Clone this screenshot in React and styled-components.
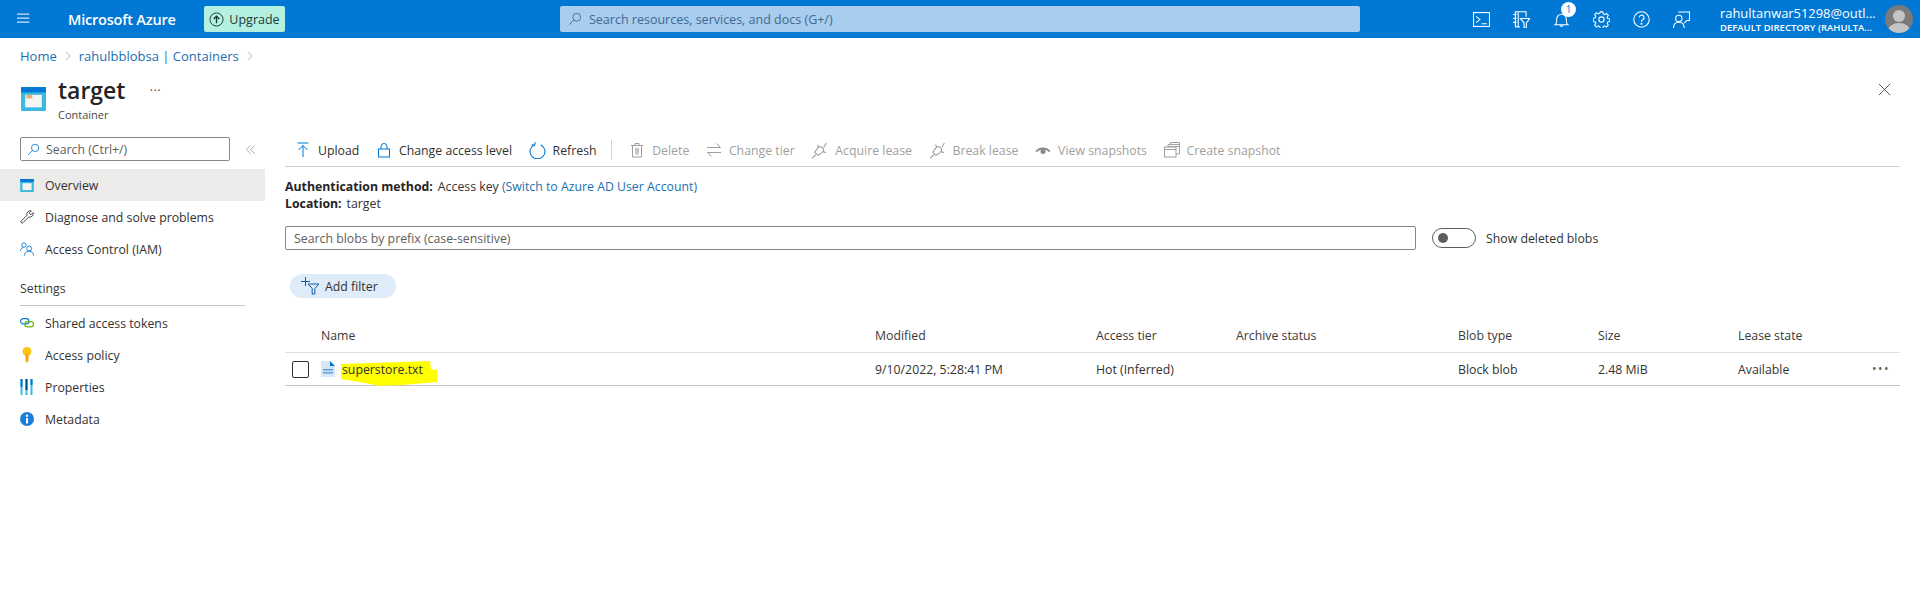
import React from 'react'
import styled, { createGlobalStyle } from 'styled-components'

const Global = createGlobalStyle`
  html, body { margin: 0; padding: 0; background: #fff; }
  body {
    font-family: "Open Sans", "Noto Sans", "Liberation Sans", sans-serif;
    font-size: 12.3px;
    color: #323130;
  }
`

const Page = styled.div`
  width: 1920px;
  height: 591px;
  overflow: hidden;
  display: flex;
  flex-direction: column;
`

/* top bar */
const TopBar = styled.header`
  height: 38px;
  background: #0078d4;
  color: #fff;
  display: flex;
  align-items: center;
  flex-shrink: 0;
`
const Burger = styled.div`
  width: 68px;
  padding-left: 17px;
  box-sizing: border-box;
  display: flex;
`
const Brand = styled.div`
  font-size: 14.5px;
  font-weight: 600;
  width: 136px;
  letter-spacing: -0.2px;
`
const UpgradeBtn = styled.div`
  width: 81px;
  height: 26px;
  margin-right: 275px;
  background: #b3f0e0;
  border-radius: 2px;
  color: #1b3a36;
  display: flex;
  align-items: center;
  justify-content: center;
  gap: 5px;
  font-size: 12.5px;
`
const GlobalSearch = styled.div`
  width: 800px;
  height: 26px;
  background: #a9cdee;
  border-radius: 2px;
  display: flex;
  align-items: center;
  gap: 7px;
  padding-left: 8px;
  box-sizing: border-box;
  color: #3e6a8e;
  font-size: 12.5px;
`
const BarIcons = styled.div`
  margin-left: 111px;
  display: flex;
  align-items: center;
  gap: 20px;
`
const BarIcon = styled.div`
  width: 20px;
  height: 20px;
  position: relative;
  display: flex;
  align-items: center;
  justify-content: center;
`
const Badge = styled.span`
  position: absolute;
  top: -7px;
  right: -5px;
  width: 15px;
  height: 15px;
  border-radius: 50%;
  background: #fff;
  color: #0078d4;
  font-size: 10px;
  line-height: 15px;
  text-align: center;
`
const Account = styled.div`
  margin-left: 29px;
  width: 167px;
  display: flex;
  flex-direction: column;
`
const AccountName = styled.div`
  font-size: 12.9px;
  line-height: 16px;
  white-space: nowrap;
`
const AccountDir = styled.div`
  font-size: 9.5px;
  font-weight: 600;
  line-height: 13px;
  white-space: nowrap;
`
const Avatar = styled.div`
  width: 28px;
  height: 28px;
  border-radius: 50%;
  background: #7a7a7a;
  overflow: hidden;
  margin-left: -2px;
  flex-shrink: 0;
`

/* blade heading */
const Crumbs = styled.nav`
  height: 36px;
  padding-left: 20px;
  box-sizing: border-box;
  display: flex;
  align-items: center;
  gap: 6px;
  color: #1a6fb0;
  font-size: 13px;
  flex-shrink: 0;
`
const BladeHead = styled.div`
  height: 50px;
  padding: 0 20px 0 21px;
  display: flex;
  align-items: flex-start;
  flex-shrink: 0;
`
const TitleIcon = styled.div`
  width: 37px;
  padding-top: 13px;
`
const TitleStack = styled.div`
  display: flex;
  flex-direction: column;
`
const Title = styled.h1`
  margin: 0;
  font-size: 23px;
  font-weight: 600;
  line-height: 32px;
  color: #252423;
`
const SubTitle = styled.div`
  font-size: 11px;
  line-height: 15px;
  margin-top: 1px;
  color: #4b4a48;
`
const TitleMore = styled.div`
  margin: 6px 0 0 24px;
  font-size: 13px;
  line-height: 12px;
  letter-spacing: 0.5px;
  color: #555;
`
const CloseBtn = styled.div`
  margin-left: auto;
  padding: 9px 9px 0 0;
`

/* columns */
const Body = styled.div`
  display: grid;
  grid-template-columns: 265px 1fr;
  flex: 1;
  min-height: 0;
`
const Side = styled.aside`
  display: flex;
  flex-direction: column;
`
const SideSearchRow = styled.div`
  height: 45px;
  padding: 13px 0 0 20px;
  box-sizing: border-box;
  display: flex;
  align-items: flex-start;
`
const SideSearch = styled.div`
  width: 210px;
  height: 24px;
  border: 1px solid #8a8886;
  border-radius: 2px;
  display: flex;
  align-items: center;
  gap: 6px;
  padding-left: 6px;
  box-sizing: border-box;
  color: #605e5c;
`
const Collapse = styled.div`
  margin: 7px 0 0 15px;
  display: flex;
`
const NavRow = styled.div`
  height: 32px;
  padding-left: 20px;
  display: flex;
  align-items: center;
  gap: 11px;
  background: ${p => (p.$active ? '#edebe9' : 'transparent')};
  white-space: nowrap;
`
const NavIcon = styled.span`
  width: 14px;
  height: 16px;
  display: flex;
  align-items: center;
  justify-content: center;
`
const NavGroup = styled.div`
  margin: 15px 20px 1px 20px;
  padding-bottom: 7px;
  border-bottom: 1px solid #c8c6c4;
  font-weight: 500;
  line-height: 18px;
  color: #3b3a39;
`

const Main = styled.main`
  padding-left: 20px;
  padding-right: 20px;
  display: flex;
  flex-direction: column;
`
const Toolbar = styled.div`
  height: 43px;
  box-sizing: border-box;
  border-bottom: 1px solid #d2d0ce;
  display: flex;
  align-items: center;
  padding: 10px 0 0 10px;
`
const Tool = styled.div`
  display: flex;
  align-items: center;
  gap: 7px;
  margin-right: 16.6px;
  white-space: nowrap;
  color: ${p => (p.$off ? '#a19f9d' : '#323130')};
`
const ToolSep = styled.div`
  width: 1px;
  height: 20px;
  background: #d2d0ce;
  margin: 0 17px 0 -2px;
`
const InfoLine = styled.div`
  line-height: 17px;
  white-space: nowrap;
  b { font-weight: 700; margin-right: 5px; color: #252423; }
  a { color: #1a6fb0; }
`
const InfoBlock = styled.div`
  margin-top: 11px;
`
const FilterRow = styled.div`
  margin-top: 14px;
  display: flex;
  align-items: center;
`
const PrefixInput = styled.div`
  width: 1131px;
  height: 24px;
  box-sizing: border-box;
  border: 1px solid #8a8886;
  border-radius: 2px;
  padding-left: 8px;
  display: flex;
  align-items: center;
  color: #605e5c;
`
const Toggle = styled.div`
  width: 44px;
  height: 20px;
  margin-left: 16px;
  border: 1px solid #605e5c;
  border-radius: 10px;
  display: flex;
  align-items: center;
  padding-left: 5px;
  box-sizing: border-box;
  &::before {
    content: "";
    width: 10px;
    height: 10px;
    border-radius: 50%;
    background: #605e5c;
  }
`
const ToggleLabel = styled.span`
  margin-left: 10px;
`
const Pill = styled.div`
  margin: 24px 0 0 5px;
  width: 106px;
  height: 24px;
  border-radius: 12px;
  background: #deecf9;
  display: flex;
  align-items: center;
  padding-left: 11px;
  gap: 5px;
  box-sizing: border-box;
`
const Table = styled.div`
  margin-top: 24px;
`
const Row = styled.div`
  display: grid;
  grid-template-columns: 36px 554px 221px 140px 222px 140px 140px 100px 1fr;
  align-items: center;
  box-sizing: border-box;
  height: ${p => (p.$head ? '31px' : '33px')};
  padding-bottom: ${p => (p.$head ? '4px' : '0')};
  border-bottom: 1px solid ${p => (p.$head ? '#e1dfdd' : '#c8c6c4')};
`
const HeadCell = styled.div`
  font-weight: 500;
  color: #3b3a39;
  white-space: nowrap;
`
const Check = styled.div`
  width: 17px;
  height: 17px;
  box-sizing: border-box;
  margin-left: 7px;
  border: 1px solid #323130;
  border-radius: 2px;
`
const NameCell = styled.div`
  position: relative;
  display: flex;
  align-items: center;
  gap: 7px;
`
const Scribble = styled.svg`
  position: absolute;
  left: 19px;
  top: 0;
`
const FileIcon = styled.svg`
  position: relative;
  display: block;
`
const FileName = styled.span`
  position: relative;
`
const More = styled.div`
  justify-self: end;
  margin-right: 10px;
  font-size: 12px;
  line-height: 10px;
  letter-spacing: 1.5px;
  color: #605e5c;
`

const Stroke = ({ size = 16, vb = '0 0 16 16', color = '#fff', sw = 1, children }) => (
  <svg width={size} height={size} viewBox={vb} fill="none" stroke={color} strokeWidth={sw}>{children}</svg>
)

const Plug = () => (
  <Stroke size={17} color="#a19f9d">
    <path d="M1 15.500 4.500 12M12 5l2.500-4" />
    <path d="M3.500 9.500 6.500 12.500 10.500 10a3 3 0 0 0 .5-4.500 3 3 0 0 0-4.500 0Z" />
    <path d="M7.500 5 6 2.500M11 9l3 1" />
  </Stroke>
)

const ContainerIcon = ({ size = 25 }) => (
  <svg width={size} height={size - 1} viewBox="0 0 21 20">
    <rect x="0" y="0" width="21" height="20" rx="1" fill="#3bb9e3" />
    <rect x="0" y="0" width="21" height="4.500" fill="#0078d4" />
    <rect x="3.500" y="6.500" width="14" height="10.500" fill="#f4f4f2" />
    {size > 16 && <rect x="4.500" y="6.500" width="5" height="3" fill="#e8b36a" />}
  </svg>
)

const tools = [
  {
    label: 'Upload',
    icon: (
      <Stroke color="#0078d4" size={16}>
        <path d="M2.500 1h11M8 15V3.500M3.500 8 8 3.500 12.500 8" />
      </Stroke>
    ),
  },
  {
    label: 'Change access level',
    icon: (
      <Stroke color="#0078d4" size={16}>
        <rect x="2.500" y="7" width="11" height="8" />
        <path d="M5 7V4.500a3 3 0 0 1 6 0V7" />
      </Stroke>
    ),
  },
  {
    label: 'Refresh',
    icon: (
      <Stroke color="#0078d4" size={17}>
        <path d="M5 2.500a7 7 0 1 0 6 0" />
        <path d="M5.500 0v3H2.500" transform="rotate(8 5 2)" />
      </Stroke>
    ),
  },
]

const offTools = [
  {
    label: 'Delete',
    icon: (
      <Stroke color="#a19f9d" size={16}>
        <path d="M3.500 3.500v11.500h9V3.500M2 3.500h12M6 3.500V1.500h4v2" />
        <path d="M6 6h4v6.500H6Z" fill="#c8c6c4" stroke="none" />
      </Stroke>
    ),
  },
  {
    label: 'Change tier',
    icon: (
      <Stroke color="#a19f9d" size={16}>
        <path d="M1 5.500h13.500M10.500 1.500l4 4M15 10.500H1.500M5.500 14.500l-4-4" />
      </Stroke>
    ),
  },
  { label: 'Acquire lease', icon: <Plug /> },
  { label: 'Break lease', icon: <Plug /> },
  {
    label: 'View snapshots',
    icon: (
      <svg width="16" height="16" viewBox="0 0 16 16">
        <path d="M0.500 9.500C3 4 13 4 15.500 9.500L14 10C11.500 6.500 4.500 6.500 2 10Z" fill="#8a8886" />
        <circle cx="8" cy="9.500" r="2.500" fill="#8a8886" />
      </svg>
    ),
  },
  {
    label: 'Create snapshot',
    icon: (
      <Stroke color="#a19f9d" size={16}>
        <rect x="0.500" y="5" width="11.500" height="10" />
        <path d="M0.500 7.500h11.500M4 5V2.500h11.500v9.500H12M4 4.500h11.500M6.500 2.500V0.500h9v2" />
      </Stroke>
    ),
  },
]

const columns = ['Modified', 'Access tier', 'Archive status', 'Blob type', 'Size', 'Lease state']

export default function App() {
  return (
    <Page>
      <Global />
      <TopBar>
        <Burger>
          <Stroke size={14} color="#cfe4f6" sw={1.3}><path d="M0 2.500h14M0 7h14M0 11.500h14" /></Stroke>
        </Burger>
        <Brand>Microsoft Azure</Brand>
        <UpgradeBtn>
          <Stroke size={15} color="#1b3a36">
            <circle cx="8" cy="8" r="7" />
            <path d="M8 12V5M5 7.500 8 4.500 11 7.500" strokeWidth="1.400" />
          </Stroke>
          Upgrade
        </UpgradeBtn>
        <GlobalSearch>
          <Stroke size={14} color="#3e6a8e"><circle cx="10" cy="6" r="4.500" /><path d="M6.700 9.300 1.500 14.500" /></Stroke>
          Search resources, services, and docs (G+/)
        </GlobalSearch>
        <BarIcons>
          <BarIcon>
            <Stroke size={17}>
              <rect x="0.500" y="1.500" width="15" height="13" />
              <path d="M3 5l3.500 3L3 11M8 12h5" />
            </Stroke>
          </BarIcon>
          <BarIcon>
            <Stroke size={18}>
              <path d="M3 15V1.500h9.500V6M3 15h4M1 4h3M1 7.500h3M1 11h3M5.500 1.500V15" />
              <path d="M7.500 7.500h8.500l-3.300 4v4.500h-2v-4.500Z" />
            </Stroke>
          </BarIcon>
          <BarIcon>
            <Stroke size={17}>
              <path d="M2 13c1.500-1 1.500-3 1.500-5.500a4.500 4.500 0 0 1 9 0c0 2.500 0 4.500 1.500 5.500ZM6.500 13a1.500 1.500 0 0 0 3 0" />
            </Stroke>
            <Badge>1</Badge>
          </BarIcon>
          <BarIcon>
            <Stroke size={17}>
              <circle cx="8" cy="8" r="2.500" />
              <path d="M6.800 0.800h2.400l.4 2 1.300.6 1.800-1.100 1.700 1.700-1.100 1.800.6 1.300 2 .4v2.400l-2 .4-.6 1.300 1.100 1.800-1.700 1.700-1.800-1.100-1.300.6-.4 2H6.800l-.4-2-1.300-.6-1.800 1.100-1.700-1.700 1.100-1.800-.6-1.300-2-.4V6.800l2-.4.6-1.300-1.100-1.800 1.700-1.700 1.800 1.100 1.300-.6Z" />
            </Stroke>
          </BarIcon>
          <BarIcon>
            <Stroke size={17}>
              <circle cx="8" cy="8" r="7.300" />
              <path d="M5.800 6.200a2.300 2.300 0 1 1 3.400 2c-.8.500-1.200.9-1.200 1.900" />
              <circle cx="8" cy="12" r=".5" fill="#fff" />
            </Stroke>
          </BarIcon>
          <BarIcon>
            <Stroke size={17}>
              <circle cx="5.500" cy="7" r="3" />
              <path d="M0.500 16c0-3.500 2-5.500 5-5.500s5 2 5 5.500M5 1h10.500v8H13l-2.500 2.500" />
            </Stroke>
          </BarIcon>
        </BarIcons>
        <Account>
          <AccountName>rahultanwar51298@outl...</AccountName>
          <AccountDir>DEFAULT DIRECTORY (RAHULTA...</AccountDir>
        </Account>
        <Avatar>
          <svg width="28" height="28" viewBox="0 0 28 28">
            <circle cx="14" cy="11" r="6" fill="#c4c4c4" />
            <ellipse cx="14" cy="26" rx="11" ry="8" fill="#c4c4c4" />
          </svg>
        </Avatar>
      </TopBar>

      <Crumbs>
        <span>Home</span>
        <Stroke size={10} color="#8a8886"><path d="M5 1.500 11.500 8 5 14.500" /></Stroke>
        <span>rahulbblobsa | Containers</span>
        <Stroke size={10} color="#8a8886"><path d="M5 1.500 11.500 8 5 14.500" /></Stroke>
      </Crumbs>

      <BladeHead>
        <TitleIcon><ContainerIcon /></TitleIcon>
        <TitleStack>
          <Title>target</Title>
          <SubTitle>Container</SubTitle>
        </TitleStack>
        <TitleMore>...</TitleMore>
        <CloseBtn>
          <Stroke size={13} color="#323130"><path d="M1 1 15 15M15 1 1 15" /></Stroke>
        </CloseBtn>
      </BladeHead>

      <Body>
        <Side>
          <SideSearchRow>
            <SideSearch>
              <Stroke size={13} color="#0078d4"><circle cx="10" cy="6" r="4.500" /><path d="M6.700 9.300 1.500 14.500" /></Stroke>
              Search (Ctrl+/)
            </SideSearch>
            <Collapse>
              <Stroke size={11} color="#8a8886"><path d="M8 2 2 8l6 6M14 2 8 8l6 6" /></Stroke>
            </Collapse>
          </SideSearchRow>
          <NavRow $active>
            <NavIcon><ContainerIcon size={14} /></NavIcon>Overview
          </NavRow>
          <NavRow>
            <NavIcon>
              <Stroke size={16} color="#323130">
                <path d="M1.500 12.500 8 6a4 4 0 0 1 5-5L10.500 3.500l2 2L15 3a4 4 0 0 1-5 5l-6.500 6.500a1.400 1.400 0 0 1-2-2Z" />
              </Stroke>
            </NavIcon>
            Diagnose and solve problems
          </NavRow>
          <NavRow>
            <NavIcon>
              <Stroke size={16} color="#0078d4">
                <circle cx="4.500" cy="3.500" r="2.500" />
                <circle cx="10.500" cy="7.500" r="2.800" />
                <path d="M0.500 10c0-2 1.500-3.500 3.500-3.500M5 15.500c0-3 2.500-5 5.500-5s5 2 5 5" />
              </Stroke>
            </NavIcon>
            Access Control (IAM)
          </NavRow>
          <NavGroup>Settings</NavGroup>
          <NavRow>
            <NavIcon>
              <svg width="16" height="12" viewBox="0 0 16 12" fill="none" strokeWidth="1.300">
                <rect x="0.700" y="1" width="9.500" height="6" rx="3" stroke="#0078d4" />
                <rect x="5.500" y="4.500" width="9.800" height="6" rx="3" stroke="#6bb700" />
              </svg>
            </NavIcon>
            Shared access tokens
          </NavRow>
          <NavRow>
            <NavIcon>
              <svg width="10" height="16" viewBox="0 0 10 16">
                <circle cx="5" cy="4.500" r="4.500" fill="#fcc419" />
                <path d="M3.500 7h3v6.500L5 16 3.500 14Z" fill="#f5a800" />
              </svg>
            </NavIcon>
            Access policy
          </NavRow>
          <NavRow>
            <NavIcon>
              <svg width="14" height="16" viewBox="0 0 14 16">
                <rect x="0.500" y="0" width="2" height="16" fill="#3bb9e3" />
                <rect x="0.500" y="0" width="2" height="8" fill="#0078d4" />
                <rect x="5.500" y="0" width="2" height="16" fill="#3bb9e3" />
                <rect x="5.500" y="0" width="2" height="11" fill="#004e8c" />
                <rect x="10.500" y="0" width="2" height="16" fill="#3bb9e3" />
                <rect x="10.500" y="0" width="2" height="6" fill="#0078d4" />
              </svg>
            </NavIcon>
            Properties
          </NavRow>
          <NavRow>
            <NavIcon>
              <svg width="14" height="14" viewBox="0 0 14 14">
                <circle cx="7" cy="7" r="7" fill="#1a7fd8" />
                <rect x="6" y="6" width="2" height="5.500" fill="#fff" />
                <circle cx="7" cy="3.800" r="1.200" fill="#fff" />
              </svg>
            </NavIcon>
            Metadata
          </NavRow>
        </Side>

        <Main>
          <Toolbar>
            {tools.map(t => (
              <Tool key={t.label}>{t.icon}{t.label}</Tool>
            ))}
            <ToolSep />
            {offTools.map(t => (
              <Tool key={t.label} $off>{t.icon}{t.label}</Tool>
            ))}
          </Toolbar>
          <InfoBlock>
            <InfoLine>
              <b>Authentication method:</b>Access key <a>(Switch to Azure AD User Account)</a>
            </InfoLine>
            <InfoLine><b>Location:</b>target</InfoLine>
          </InfoBlock>
          <FilterRow>
            <PrefixInput>Search blobs by prefix (case-sensitive)</PrefixInput>
            <Toggle />
            <ToggleLabel>Show deleted blobs</ToggleLabel>
          </FilterRow>
          <Pill>
            <svg width="19" height="18" viewBox="0 0 19 18" fill="none" stroke="#0f5c9e">
              <path d="M0 4.500h9M4.500 0v9" />
              <path d="M7 7h11l-4.200 4.500V17h-2.600v-5.500Z" />
            </svg>
            Add filter
          </Pill>
          <Table>
            <Row $head>
              <span />
              <HeadCell>Name</HeadCell>
              {columns.map(c => <HeadCell key={c}>{c}</HeadCell>)}
            </Row>
            <Row>
              <Check />
              <NameCell>
                <Scribble width="98" height="26" viewBox="0 0 98 26">
                  <path d="M1 3 90 0l1 8 6 1v12l-35 3-22 1-15-3-24-4Z" fill="#ffff00" />
                </Scribble>
                <FileIcon width="14" height="16" viewBox="0 0 14 16">
                  <path d="M0 0h9l5 5v11H0Z" fill="#d5e6f6" />
                  <path d="M9 0l5 5H9Z" fill="#0078d4" />
                  <path d="M2 8h10v1.500H2ZM2 11h10v1.500H2Z" fill="#5ea0d8" />
                </FileIcon>
                <FileName>superstore.txt</FileName>
              </NameCell>
              <div>9/10/2022, 5:28:41 PM</div>
              <div>Hot (Inferred)</div>
              <div />
              <div>Block blob</div>
              <div>2.48 MiB</div>
              <div>Available</div>
              <More>•••</More>
            </Row>
          </Table>
        </Main>
      </Body>
    </Page>
  )
}
